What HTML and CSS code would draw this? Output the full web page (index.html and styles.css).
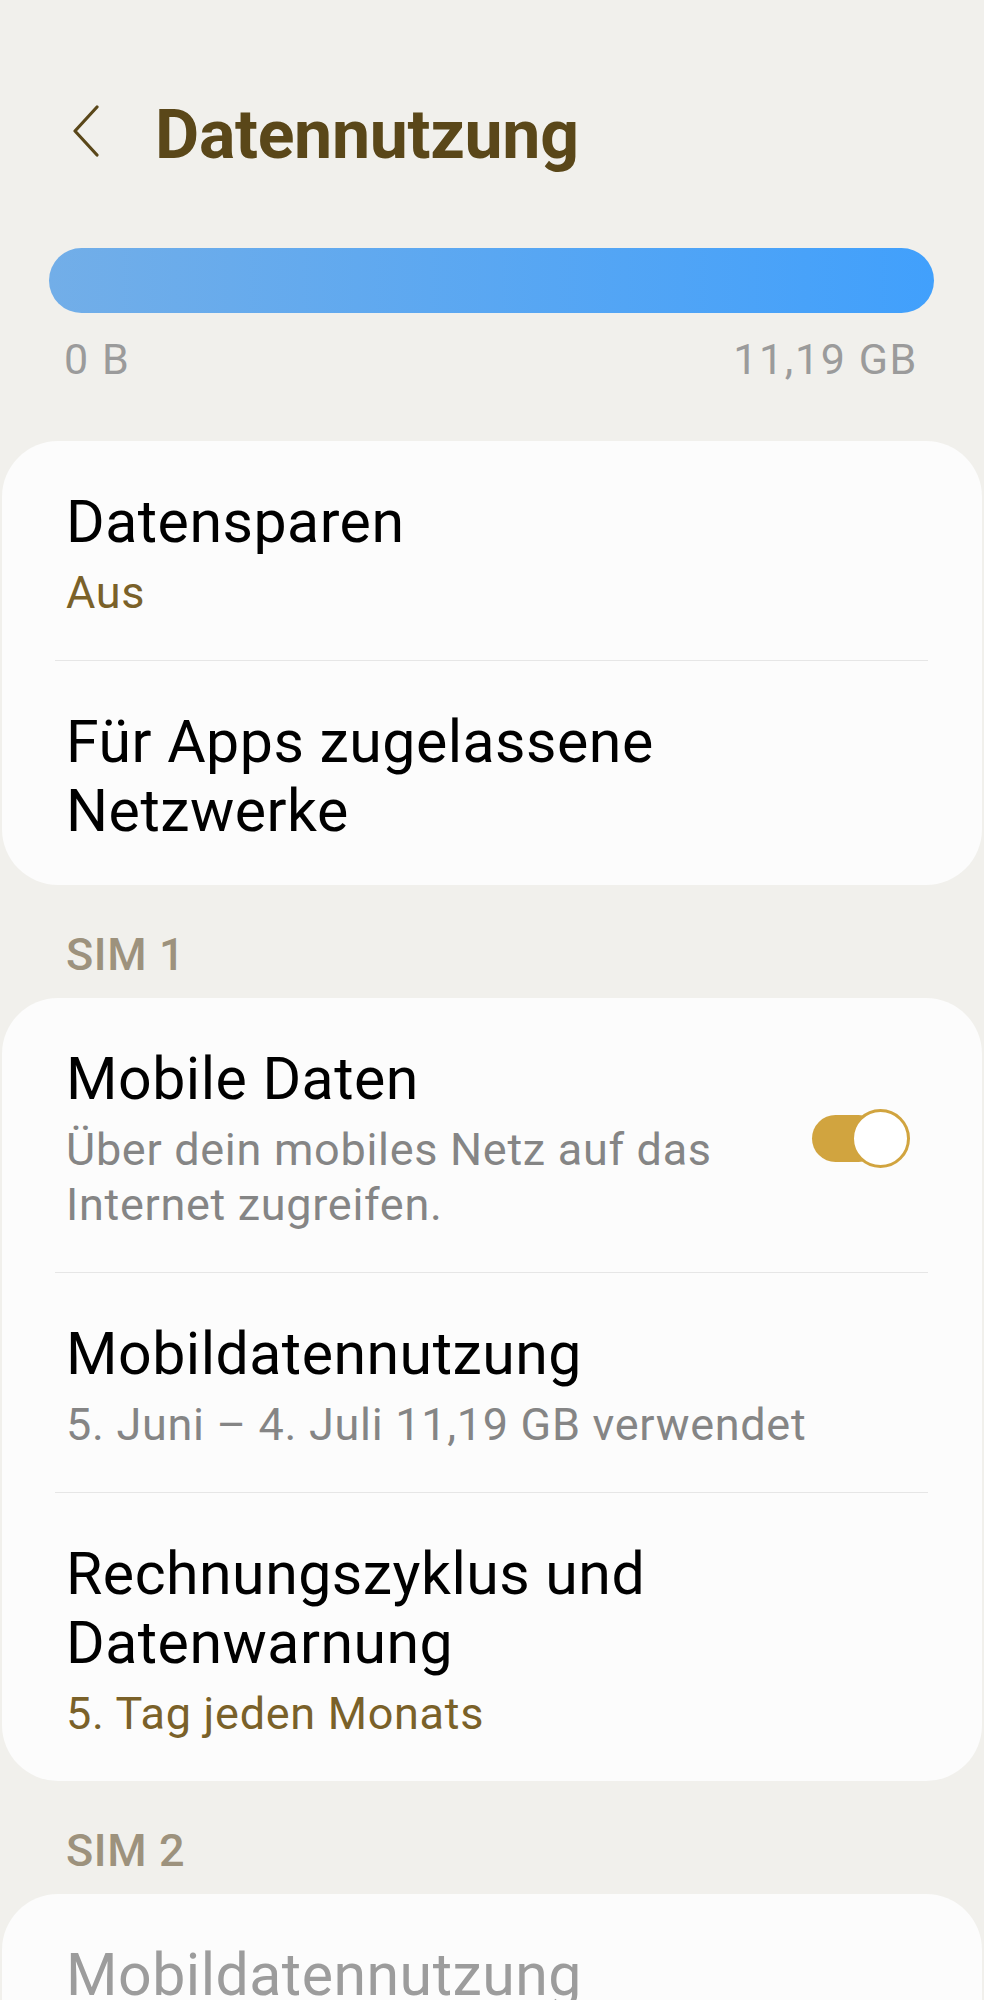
FILE: index.html
```html
<!DOCTYPE html>
<html lang="de">
<head>
    <meta charset="UTF-8">
    <meta name="viewport" content="width=device-width, initial-scale=1.0">
    <title>Datennutzung</title>
    <link rel="stylesheet" href="styles.css">
</head>
<body>
    <div class="header">
        <svg class="back" width="28" height="52" viewBox="0 0 28 52">
            <polyline points="25,2 3,26 25,50" fill="none" stroke="#5a4719" stroke-width="3.2" stroke-linecap="round" stroke-linejoin="round"/>
        </svg>
        <h1>Datennutzung</h1>
    </div>

    <div class="usage">
        <div class="usage-bar"></div>
        <div class="usage-labels">
            <span>0 B</span>
            <span>11,19 GB</span>
        </div>
    </div>

    <div class="card">
        <div class="row">
            <div class="row-text">
                <div class="title">Datensparen</div>
                <div class="sub accent">Aus</div>
            </div>
        </div>
        <div class="divider"></div>
        <div class="row">
            <div class="row-text">
                <div class="title">Für Apps zugelassene Netzwerke</div>
            </div>
        </div>
    </div>

    <div class="section">SIM 1</div>
    <div class="card">
        <div class="row">
            <div class="row-text narrow">
                <div class="title">Mobile Daten</div>
                <div class="sub">Über dein mobiles Netz auf das Internet zugreifen.</div>
            </div>
            <div class="switch on"><span class="knob"></span></div>
        </div>
        <div class="divider"></div>
        <div class="row">
            <div class="row-text">
                <div class="title">Mobildatennutzung</div>
                <div class="sub">5. Juni – 4. Juli 11,19 GB verwendet</div>
            </div>
        </div>
        <div class="divider"></div>
        <div class="row">
            <div class="row-text">
                <div class="title">Rechnungszyklus und Datenwarnung</div>
                <div class="sub accent">5. Tag jeden Monats</div>
            </div>
        </div>
    </div>

    <div class="section">SIM 2</div>
    <div class="card">
        <div class="row">
            <div class="row-text">
                <div class="title disabled">Mobildatennutzung</div>
                <div class="sub disabled">Keine Daten verwendet</div>
            </div>
        </div>
    </div>
</body>
</html>
```

FILE: styles.css
```css
body {
    font-family: Roboto, 'Noto Sans', sans-serif;
    margin: 0;
    padding: 0;
    background-color: #f1f0ec;
    color: #000;
}
.header {
    display: flex;
    align-items: center;
    height: 80px;
    padding: 95px 0 0 72px;
}
.header .back {
    margin-top: -8px;
}
.header h1 {
    margin: 0 0 0 55px;
    font-size: 68px;
    line-height: 80px;
    font-weight: 700;
    color: #5a4719;
    letter-spacing: -0.3px;
}
.usage {
    padding: 73px 50px 0 49px;
}
.usage-bar {
    height: 65px;
    border-radius: 33px;
    background: linear-gradient(to right, #72aee8, #41a0fc);
}
.usage-labels {
    display: flex;
    justify-content: space-between;
    padding: 21px 16px 0 15px;
    font-size: 43px;
    line-height: 50px;
    letter-spacing: 1.6px;
    color: #9b9b9b;
}
.card {
    margin: 57px 2px 0;
    background: #fcfcfc;
    border-radius: 56px;
}
.row {
    display: flex;
    align-items: center;
    padding: 46px 72px 40px 64px;
}
.row-text {
    flex: 1;
}
.row-text.narrow {
    padding-right: 40px;
}
.title {
    font-size: 59px;
    line-height: 69px;
    letter-spacing: 0.5px;
}
.sub {
    margin-top: 9px;
    font-size: 45px;
    line-height: 55px;
    letter-spacing: 0.7px;
    color: #858585;
}
.sub.accent {
    color: #7a6129;
}
.disabled {
    color: #9c9c9c;
}
.divider {
    height: 1px;
    margin: 0 54px 0 53px;
    background: #e6e6e6;
}
.section {
    padding: 43px 0 17px 66px;
    font-size: 45px;
    line-height: 53px;
    font-weight: 500;
    letter-spacing: 0.6px;
    color: #9d927d;
}
.section + .card {
    margin-top: 0;
}
.switch {
    position: relative;
    width: 98px;
    height: 59px;
}
.switch::before {
    content: "";
    position: absolute;
    left: 0;
    top: 6px;
    width: 70px;
    height: 47px;
    border-radius: 24px;
    background: #d1a43f;
}
.switch .knob {
    position: absolute;
    right: 0;
    top: 0;
    width: 53px;
    height: 53px;
    border: 3px solid #d1a43f;
    border-radius: 50%;
    background: #fff;
}
```
